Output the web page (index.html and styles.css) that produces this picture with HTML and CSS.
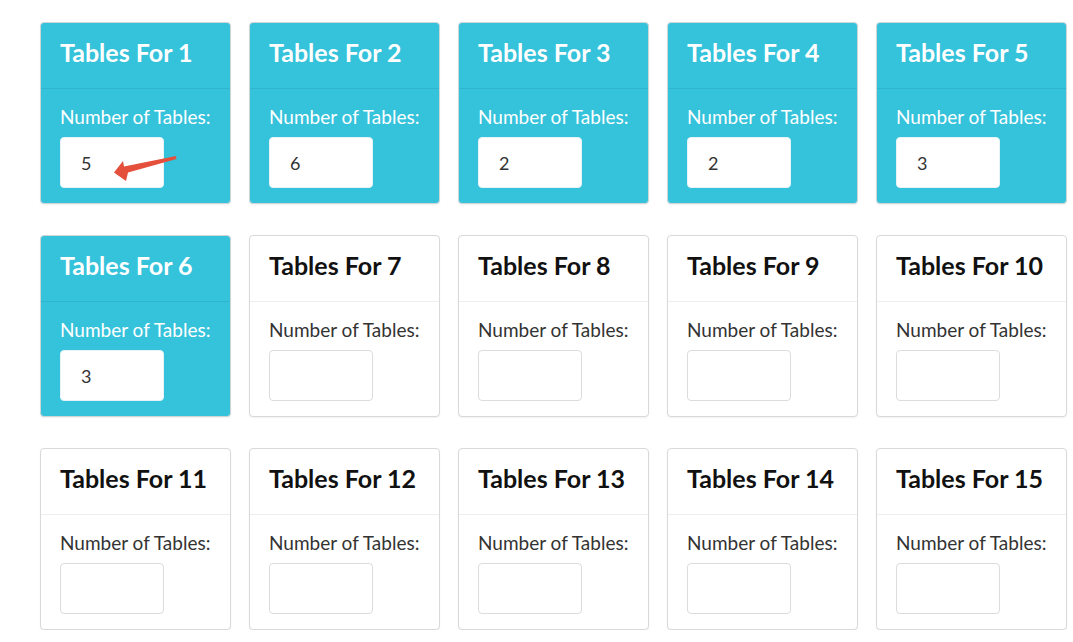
FILE: index.html
```html
<!DOCTYPE html>
<html>
<head>
<meta charset="utf-8">
<link rel="stylesheet" href="styles.css">
</head>
<body>
<div class="grid">
  <div class="card filled"><div class="card-head">Tables For 1</div><div class="card-body"><div class="label">Number of Tables:</div><div class="field-wrap"><div class="field">5</div><svg class="arrow" width="70" height="32" viewBox="0 0 70 32"><path d="M4 21.5 L13 10 L14 15.5 L66 5 L66.5 8 L18 21.5 L16 30 Z" fill="#e4503b"/></svg></div></div></div>
  <div class="card filled"><div class="card-head">Tables For 2</div><div class="card-body"><div class="label">Number of Tables:</div><div class="field">6</div></div></div>
  <div class="card filled"><div class="card-head">Tables For 3</div><div class="card-body"><div class="label">Number of Tables:</div><div class="field">2</div></div></div>
  <div class="card filled"><div class="card-head">Tables For 4</div><div class="card-body"><div class="label">Number of Tables:</div><div class="field">2</div></div></div>
  <div class="card filled"><div class="card-head">Tables For 5</div><div class="card-body"><div class="label">Number of Tables:</div><div class="field">3</div></div></div>
  <div class="card filled"><div class="card-head">Tables For 6</div><div class="card-body"><div class="label">Number of Tables:</div><div class="field">3</div></div></div>
  <div class="card"><div class="card-head">Tables For 7</div><div class="card-body"><div class="label">Number of Tables:</div><div class="field"></div></div></div>
  <div class="card"><div class="card-head">Tables For 8</div><div class="card-body"><div class="label">Number of Tables:</div><div class="field"></div></div></div>
  <div class="card"><div class="card-head">Tables For 9</div><div class="card-body"><div class="label">Number of Tables:</div><div class="field"></div></div></div>
  <div class="card"><div class="card-head">Tables For 10</div><div class="card-body"><div class="label">Number of Tables:</div><div class="field"></div></div></div>
  <div class="card"><div class="card-head">Tables For 11</div><div class="card-body"><div class="label">Number of Tables:</div><div class="field"></div></div></div>
  <div class="card"><div class="card-head">Tables For 12</div><div class="card-body"><div class="label">Number of Tables:</div><div class="field"></div></div></div>
  <div class="card"><div class="card-head">Tables For 13</div><div class="card-body"><div class="label">Number of Tables:</div><div class="field"></div></div></div>
  <div class="card"><div class="card-head">Tables For 14</div><div class="card-body"><div class="label">Number of Tables:</div><div class="field"></div></div></div>
  <div class="card"><div class="card-head">Tables For 15</div><div class="card-body"><div class="label">Number of Tables:</div><div class="field"></div></div></div>
</div>
</body>
</html>
```
FILE: styles.css
```css
html, body {
  margin: 0;
  padding: 0;
  background: #fff;
}
body {
  font-family: Lato, "Open Sans", sans-serif;
}
.grid {
  display: grid;
  grid-template-columns: repeat(5, 191px);
  column-gap: 18px;
  row-gap: 31px;
  padding: 22px 0 0 40px;
}
.card {
  border: 1px solid #d9d9d9;
  border-radius: 4px;
  background: #fff;
  box-shadow: 0 1px 2px rgba(0,0,0,0.06);
  color: #111;
}
.card.filled {
  background: #35c2db;
  border-color: #cfd6d8;
  color: #fff;
}
.card-head {
  height: 51px;
  padding: 14px 19px 0;
  font-size: 25px;
  line-height: 30px;
  font-weight: 700;
  border-bottom: 1px solid #eeeeee;
}
.card.filled .card-head {
  border-bottom-color: #30b5cd;
}
.card-body {
  padding: 17px 19px 15px;
}
.label {
  font-size: 19px;
  line-height: 22px;
  color: #333;
}
.card.filled .label {
  color: #fff;
}
.field-wrap {
  position: relative;
}
.field {
  margin-top: 9px;
  width: 102px;
  height: 49px;
  border: 1px solid #dcdcdc;
  border-radius: 4px;
  background: #fff;
  display: flex;
  align-items: center;
  text-indent: 20px;
  font-size: 18px;
  color: #333;
}
.card.filled .field {
  border-color: #e6f4f7;
}
.arrow {
  position: absolute;
  left: 50px;
  top: 14px;
}
```
